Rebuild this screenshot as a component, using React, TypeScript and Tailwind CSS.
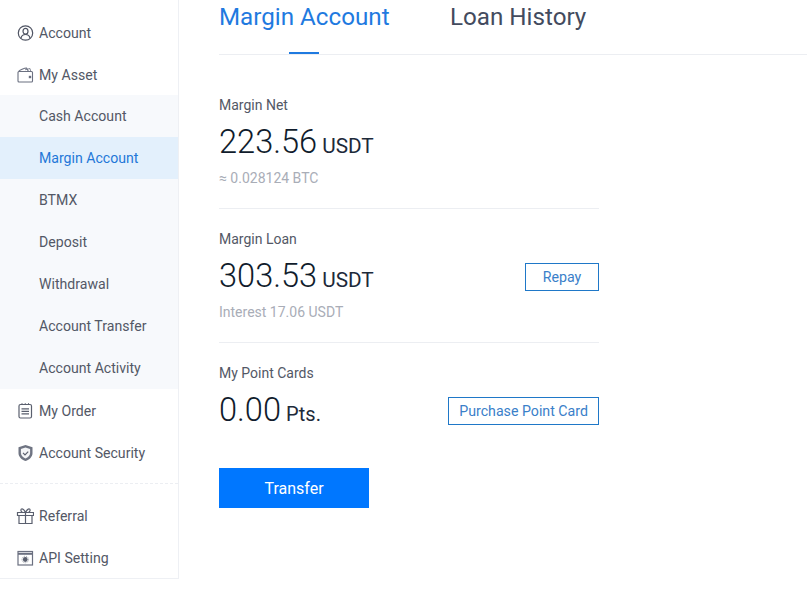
import React from "react";
import { clsx } from "clsx";

const iconClass = "w-[18px] h-[18px] shrink-0";

const UserIcon = () => (
  <svg viewBox="0 0 18 18" className={iconClass} fill="none" stroke="#4f5463" strokeWidth="1.2">
    <circle cx="9.500" cy="9" r="7.200" />
    <ellipse cx="9.500" cy="7.200" rx="2.500" ry="2.900" />
    <path d="M5 14c.5-2.300 2.300-3.500 4.500-3.500s4 1.200 4.500 3.500" />
  </svg>
);

const WalletIcon = () => (
  <svg viewBox="0 0 18 18" className={iconClass} fill="none" stroke="#6b7080" strokeWidth="1.100">
    <path d="M2 6.500a1 1 0 0 1 1-1h12.500a1 1 0 0 1 1 1v8.500a1 1 0 0 1-1 1h-12.500a1 1 0 0 1-1-1z" />
    <path d="M2.500 5.500c1-1.200 6-3.500 8-3.500l2 3.500" />
    <path d="M9 3.800l5-1.300.800 3" strokeWidth="0.800" />
    <rect x="12.800" y="9.800" width="2.400" height="2.400" fill="#6b7080" stroke="none" />
  </svg>
);

const OrderIcon = () => (
  <svg viewBox="0 0 18 18" className={iconClass} fill="none" stroke="#5a5f6e" strokeWidth="1.200">
    <rect x="3" y="2.500" width="12.500" height="13.500" rx="1.500" />
    <path d="M6 1.200v1.800M9.250 1.200v1.800M12.500 1.200v1.800" strokeWidth="1" />
    <path d="M5.500 6.800h7.500M5.500 9.300h7.500M5.500 11.800h7.500" />
  </svg>
);

const ShieldIcon = () => (
  <svg viewBox="0 0 18 18" className={iconClass} fill="none">
    <path d="M9.500 1l7 2.300v5.700c0 3.800-3 6.700-7 8-4-1.300-7-4.200-7-8V3.300z" fill="#6f7482" />
    <path d="M9.500 3.600l4.600 1.500v4c0 2.600-2 4.500-4.600 5.400-2.600-.9-4.600-2.800-4.600-5.400v-4z" fill="#f4f5f7" />
    <path d="M7 8.800l2 2 3.200-3.200" stroke="#5a5f6e" strokeWidth="1.200" />
  </svg>
);

const GiftIcon = () => (
  <svg viewBox="0 0 18 18" className={iconClass} fill="none" stroke="#5a5f6e" strokeWidth="1.200">
    <path d="M1.500 5.500h16v3h-16zM3 8.500v8h13v-8M9.500 5.500v11" />
    <path d="M9.500 5.500C8 2.500 6.500 1.500 5.500 2s-.8 2.500 1 3.500M9.500 5.500c1.500-3 3-4 4-3.500s.8 2.500-1 3.500" />
  </svg>
);

const ApiIcon = () => (
  <svg viewBox="0 0 18 18" className={iconClass} fill="none">
    <rect x="2" y="2.500" width="14.500" height="13.500" stroke="#6b7080" strokeWidth="1.200" />
    <path d="M2 4.800h14.500" stroke="#6b7080" strokeWidth="2" />
    <circle cx="9.250" cy="10.500" r="2.400" fill="#5a5f6e" />
    <circle cx="9.250" cy="10.500" r="3.300" stroke="#5a5f6e" strokeWidth="0.600" strokeDasharray="1 1" />
  </svg>
);

const subItems = ["Cash Account", "Margin Account", "BTMX", "Deposit", "Withdrawal", "Account Transfer", "Account Activity"];

const NavRow = ({ icon, label }: { icon: React.ReactNode; label: string }) => (
  <div className="h-[42px] flex items-center pl-4 gap-[5px] text-[#535866]">
    {icon}
    <span className="pt-[2px]">{label}</span>
  </div>
);

const Stat = ({ label, value, unit, note, action, unitClass }: { label: string; value: string; unit: string; note?: string; action?: string; unitClass?: string }) => (
  <div className="w-[380px]">
    <div className="text-sm leading-5 text-[#535866]">{label}</div>
    <div className="flex items-center justify-between mt-[5px]">
      <div className="flex items-baseline text-[#1d2a3a]">
        <span className="text-[32.6px] leading-[44px] font-light text-[#101c2c]">{value}</span>
        <span className={clsx("ml-[5px]", unitClass)}>{unit}</span>
      </div>
      {action && (
        <button className="h-7 mt-[2px] pt-[2px] px-[10px] min-w-[74px] border border-[#1f78c8] text-[14.2px] text-[#3a80c9]">{action}</button>
      )}
    </div>
    {note && <div className="mt-1 text-sm leading-5 text-[#a9adb7]">{note}</div>}
  </div>
);

export default function App() {
  return (
    <div className="w-[807px] h-[594px] bg-white flex overflow-hidden font-['Roboto',sans-serif]">
      <aside className="w-[179px] h-[579px] shrink-0 pt-3 border-r border-b border-[#eef0f4] text-[14.1px]">
        <NavRow icon={<UserIcon />} label="Account" />
        <NavRow icon={<WalletIcon />} label="My Asset" />
        <div className="bg-[#f7f9fc] -mt-px mb-px">
          {subItems.map((item) => (
            <div
              key={item}
              className={clsx(
                "h-[42px] flex items-center pl-[39px] pt-[2px]",
                item === "Margin Account" ? "bg-[#e3f0fc] text-[#1f78d8]" : "text-[#535866]"
              )}
            >
              {item}
            </div>
          ))}
        </div>
        <NavRow icon={<OrderIcon />} label="My Order" />
        <NavRow icon={<ShieldIcon />} label="Account Security" />
        <div className="mt-[9px] mb-[11px] border-t border-dashed border-[#eceef2]" />
        <NavRow icon={<GiftIcon />} label="Referral" />
        <NavRow icon={<ApiIcon />} label="API Setting" />
      </aside>

      <main className="flex-1 pl-10">
        <div className="h-[55px] flex border-b border-[#eceef2] text-[24.2px] leading-[34px]">
          <div className="relative w-[231px] text-[#1f7ae0]">
            Margin Account
            <span className="absolute left-[70px] top-[52px] w-[30px] h-[2px] bg-[#1f7ae0]" />
          </div>
          <div className="text-[#434b5e]">Loan History</div>
        </div>

        <div className="pt-10">
          <Stat label="Margin Net" value="223.56" unit="USDT" unitClass="text-[20.8px]" note="≈ 0.028124 BTC" />
        </div>
        <div className="w-[380px] mt-5 mb-5 border-t border-[#eceef2]" />
        <Stat label="Margin Loan" value="303.53" unit="USDT" unitClass="text-[20.8px]" note="Interest 17.06 USDT" action="Repay" />
        <div className="w-[380px] mt-5 mb-5 border-t border-[#eceef2]" />
        <Stat label="My Point Cards" value="0.00" unit="Pts." unitClass="text-xl" action="Purchase Point Card" />

        <button className="mt-[36px] w-[150px] h-10 pt-[2px] bg-[#0077ff] text-white">Transfer</button>
      </main>
    </div>
  );
}
